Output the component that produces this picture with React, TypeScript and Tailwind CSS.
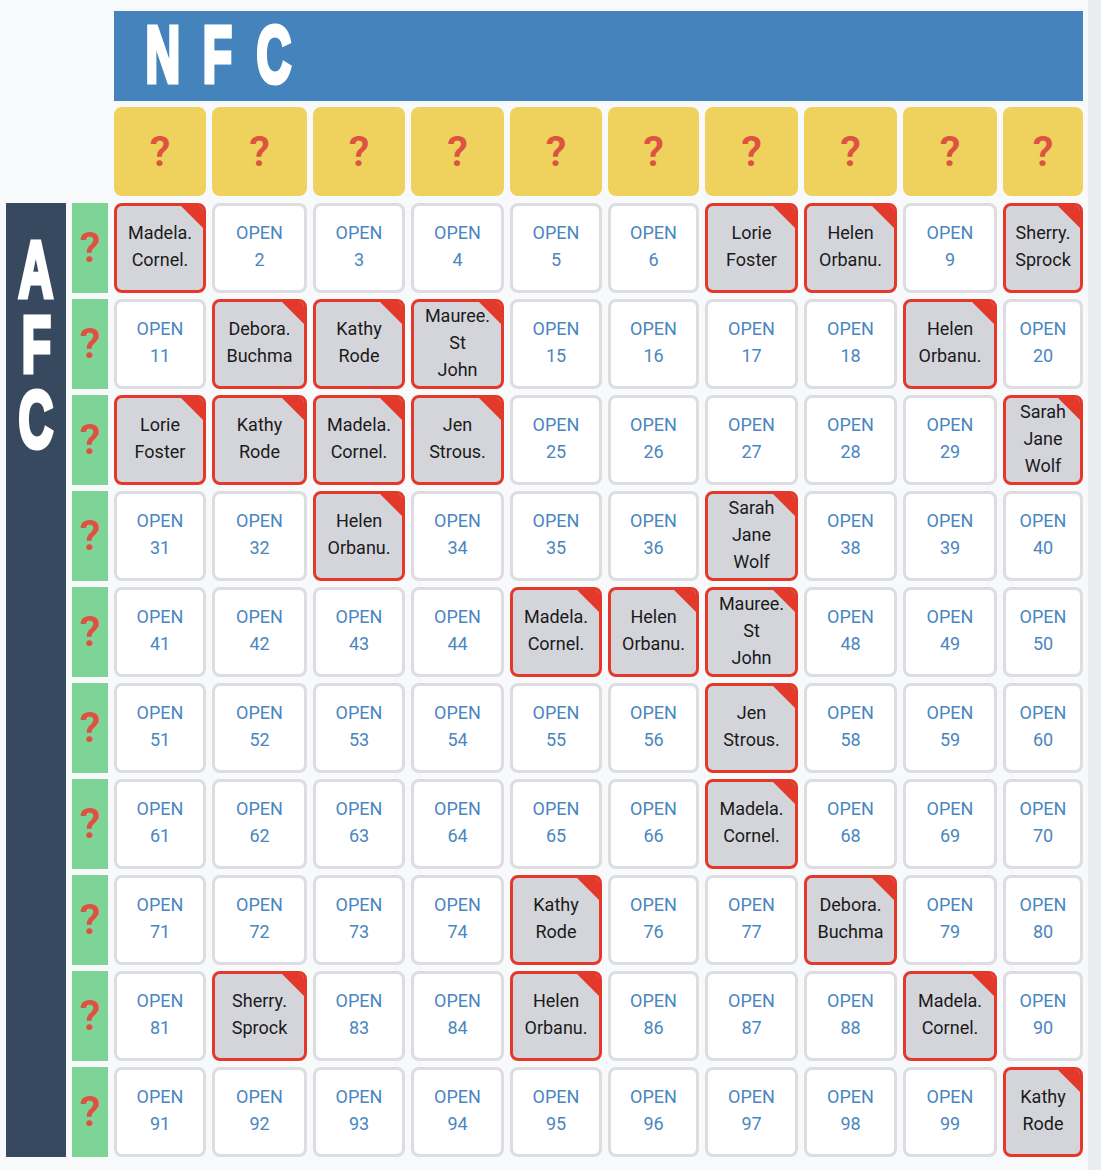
import React from "react";

const colWidths = [
  "w-[92px]",
  "w-[95px]",
  "w-[92px]",
  "w-[93px]",
  "w-[92px]",
  "w-[91px]",
  "w-[93px]",
  "w-[93px]",
  "w-[94px]",
  "w-[80px]",
];

// squares that are already claimed, keyed by square number
const taken: Record<number, string[]> = {
  1: ["Madela.", "Cornel."],
  7: ["Lorie", "Foster"],
  8: ["Helen", "Orbanu."],
  10: ["Sherry.", "Sprock"],
  12: ["Debora.", "Buchma"],
  13: ["Kathy", "Rode"],
  14: ["Mauree.", "St", "John"],
  19: ["Helen", "Orbanu."],
  21: ["Lorie", "Foster"],
  22: ["Kathy", "Rode"],
  23: ["Madela.", "Cornel."],
  24: ["Jen", "Strous."],
  30: ["Sarah", "Jane", "Wolf"],
  33: ["Helen", "Orbanu."],
  37: ["Sarah", "Jane", "Wolf"],
  45: ["Madela.", "Cornel."],
  46: ["Helen", "Orbanu."],
  47: ["Mauree.", "St", "John"],
  57: ["Jen", "Strous."],
  67: ["Madela.", "Cornel."],
  75: ["Kathy", "Rode"],
  78: ["Debora.", "Buchma"],
  82: ["Sherry.", "Sprock"],
  85: ["Helen", "Orbanu."],
  89: ["Madela.", "Cornel."],
  100: ["Kathy", "Rode"],
};

const font = { fontFamily: "Roboto, 'Liberation Sans', sans-serif" };

function BigLetter({ ch, box }: { ch: string; box: string }) {
  return (
    <span className={`${box} flex justify-center`}>
      <span
        className="inline-block text-[80px] leading-[75px] font-bold text-white scale-x-[0.6] [-webkit-text-stroke:5px_white]"
        style={{ fontFamily: "'Liberation Sans', Arial, sans-serif" }}
      >
        {ch}
      </span>
    </span>
  );
}

function Question() {
  return (
    <span className="text-[42px] leading-none font-semibold text-[#dc5441]">?</span>
  );
}

function Square({ n }: { n: number }) {
  const names = taken[n];
  if (names) {
    return (
      <div className="relative h-[90px] overflow-hidden rounded-[8px] border-[3px] border-[#e2392b] bg-[#d4d5da] flex flex-col items-center justify-center pb-[4px] text-[18px] leading-[27px] text-[#1b1b1b]">
        <div className="absolute top-0 right-0 w-[22px] h-[22px] bg-[#e2392b] [clip-path:polygon(0_0,100%_0,100%_100%)]" />
        {names.map((line, i) => (
          <span key={i}>{line}</span>
        ))}
      </div>
    );
  }
  return (
    <div className="h-[90px] rounded-[8px] border-[3px] border-[#dcdde1] bg-white flex flex-col items-center justify-center pb-[4px] text-[18px] leading-[27px] text-[#4a86bf]">
      <span>OPEN</span>
      <span>{n}</span>
    </div>
  );
}

export default function App() {
  const rows = Array.from({ length: 10 }, (_, r) => r);

  return (
    <div className="min-h-screen flex bg-[#f7f9fb]" style={font}>
      <div className="w-[1088px] pt-[11px] pl-[6px] pb-[13px]">
        <div className="pl-[108px] flex flex-col gap-[6px]">
          <div className="w-[969px] h-[90px] bg-[#4583bc] flex items-center pl-[32px] pb-[4px] gap-[27px]">
            <BigLetter ch="N" box="w-[34px]" />
            <BigLetter ch="F" box="w-[21px]" />
            <BigLetter ch="C" box="w-[38px]" />
          </div>
          <div className="flex gap-[6px]">
            {colWidths.map((w, i) => (
              <div
                key={i}
                className={`${w} h-[89px] rounded-[8px] bg-[#efd15d] flex items-center justify-center`}
              >
                <Question />
              </div>
            ))}
          </div>
        </div>

        <div className="mt-[7px] flex">
          <div className="w-[60px] h-[954px] bg-[#37495f] flex flex-col items-center pt-[29px]">
            <BigLetter ch="A" box="w-[36px]" />
            <BigLetter ch="F" box="w-[26px]" />
            <BigLetter ch="C" box="w-[36px]" />
          </div>
          <div className="ml-[6px] flex flex-col gap-[6px]">
            {rows.map((r) => (
              <div
                key={r}
                className="w-[36px] h-[90px] bg-[#7ed396] flex items-center justify-center"
              >
                <Question />
              </div>
            ))}
          </div>
          <div className="ml-[6px] grid grid-cols-[92px_95px_92px_93px_92px_91px_93px_93px_94px_80px] gap-[6px]">
            {rows.map((r) =>
              colWidths.map((_, c) => <Square key={`${r}-${c}`} n={r * 10 + c + 1} />)
            )}
          </div>
        </div>
      </div>
      <div className="flex-1 bg-[#e9ecf1]" />
    </div>
  );
}
